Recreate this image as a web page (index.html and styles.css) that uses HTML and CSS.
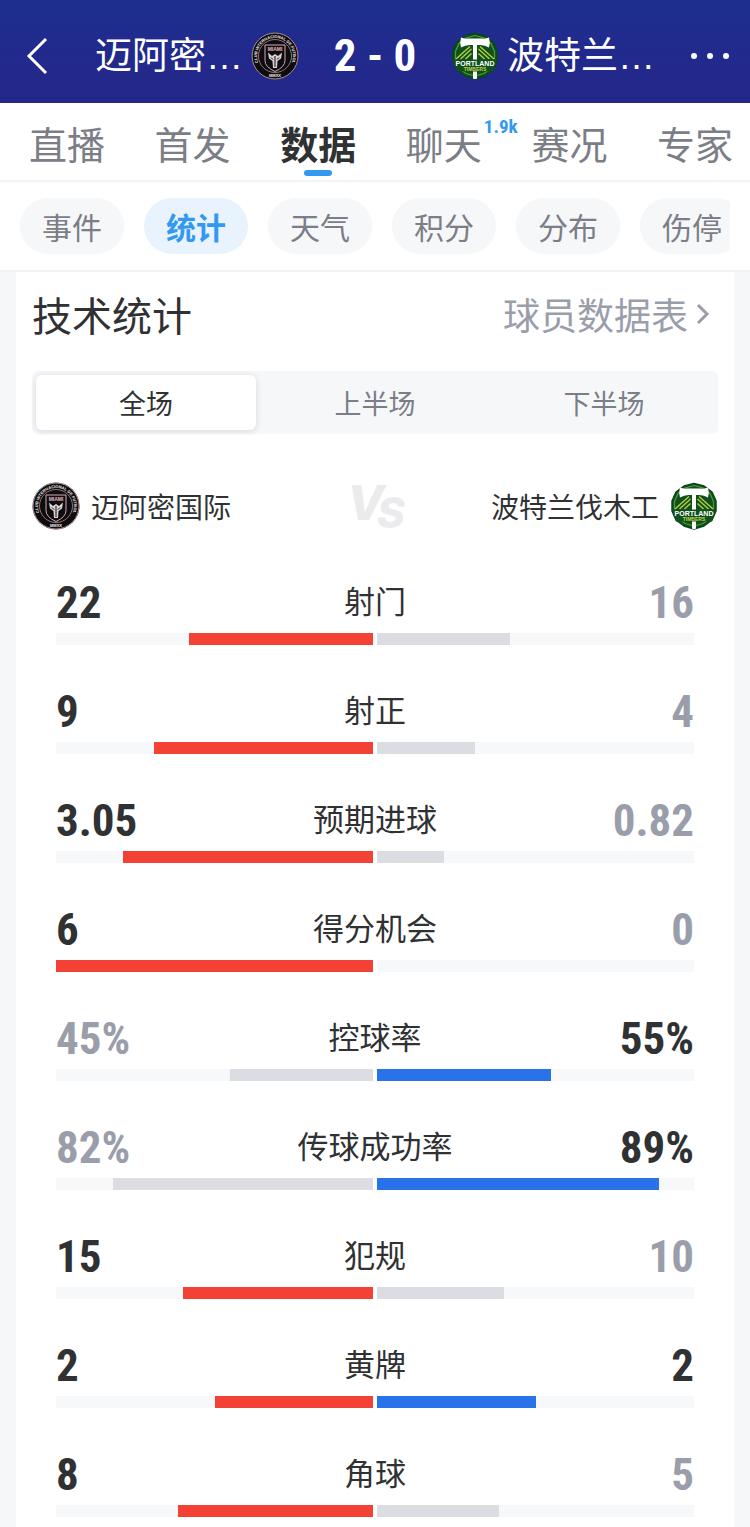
FILE: index.html
```
<!DOCTYPE html>
<html lang="zh-CN">
<head>
  <meta charset="UTF-8">
  <meta name="viewport" content="width=device-width, initial-scale=1">
  <title>迈阿密国际 2-0 波特兰伐木工</title>
  <link rel="stylesheet" href="styles.css">
</head>
<body>
  <!-- 队徽 -->
  <svg class="symbols" width="0" height="0" aria-hidden="true">
    <defs>
      <path id="ring" d="M8.400 33a18 18 0 1 1 31.200 0"/>
      <symbol id="miami" viewBox="0 0 48 48">
        <circle cx="24" cy="24" r="23.500" fill="#0d0c0e"/>
        <circle cx="24" cy="24" r="23" fill="none" stroke="#e0b3bf" stroke-width=".8"/>
        <text class="crest-ring"><textPath href="#ring" startOffset="50%">CLUB INTERNACIONAL DE FUTBOL</textPath></text>
        <text x="24" y="45" class="crest-ring">MMXX</text>
        <circle cx="24" cy="24" r="16.500" fill="#0d0c0e" stroke="#c9a0ab" stroke-width=".7"/>
        <path d="M14 13h20v15.500q0 6.500-10 11-10-4.500-10-11z" fill="#0d0c0e" stroke="#dba8b5" stroke-width="1"/>
        <text x="24" y="18.500" class="crest-miami">MIAMI</text>
        <path d="M17 20.500 21 24l3-2 3 2 4-3.500-1 6-3.500 2.500-.5 7h-4l-.5-7-3.500-2.500z" fill="#d9d3d5"/>
        <path d="M24 24v11M20 25.500l2 2M28 25.500l-2 2" stroke="#0d0c0e" stroke-width="1"/>
      </symbol>
      <symbol id="portland" viewBox="0 0 48 48">
        <path d="M24 1.500 34 4l8 6 4 9v10l-4 9-8 6-10 3-10-3-8-6-4-9V19l4-9 8-6z" fill="#10501f" stroke="#0b4419" stroke-width="1.500" stroke-linejoin="round"/>
        <path d="M24 3.500 33 6l7 5.500 3.500 8v9l-3.500 8-7 5L24 44l-9-2.500-7-5-3.500-8v-9l3.500-8L15 6z" fill="none" stroke="#4d9b35" stroke-width="1.200"/>
        <path d="M5 27 19 14.500M9.500 27 20.500 17M14.500 27l6-5.500M43 27 29 14.500M38.500 27 27.500 17M33.500 27l-6-5.500" stroke="#b5cf3c" stroke-width="1.400"/>
        <path d="M22 12h4v34.500q-2 1-4 0z" fill="#fff"/>
        <path d="M10 5.500q3 1.500 7 1h14q4 .5 7-1 1.500 5 0 10-4-2.500-8.500-2.500h-11q-4.500 0-8.500 2.500-1.500-5 0-10z" fill="#fff"/>
        <path d="M2.500 27.500h43v2.500L42 39.500H6L2.500 30z" fill="#10501f"/>
        <text x="24" y="33.500" class="crest-portland">PORTLAND</text>
        <text x="24" y="39" class="crest-timbers">TIMBERS</text>
      </symbol>
    </defs>
  </svg>

  <header class="topbar">
    <button class="icon-btn" aria-label="返回">
      <svg width="28" height="38" viewBox="-6 0 28 38" fill="none" stroke="#fff" stroke-width="3"><path d="M20 2 3 19l17 17"/></svg>
    </button>
    <div class="match">
      <span class="match-name">迈阿密…</span>
      <svg class="crest"><use href="#miami"/></svg>
      <strong class="score">2 - 0</strong>
      <svg class="crest"><use href="#portland"/></svg>
      <span class="match-name">波特兰…</span>
    </div>
    <button class="icon-btn more" aria-label="更多">
      <svg width="40" height="8" viewBox="0 0 40 8" fill="#fff"><circle cx="4" cy="4" r="3"/><circle cx="20" cy="4" r="3"/><circle cx="36" cy="4" r="3"/></svg>
    </button>
  </header>

  <nav class="tabs">
    <a href="#live">直播</a>
    <a href="#lineup">首发</a>
    <a href="#data" class="active">数据</a>
    <a href="#chat">聊天<sup class="badge">1.9k</sup></a>
    <a href="#report">赛况</a>
    <a href="#expert">专家</a>
  </nav>

  <div class="chips">
    <div class="chips-scroll">
      <button>事件</button>
      <button class="active">统计</button>
      <button>天气</button>
      <button>积分</button>
      <button>分布</button>
      <button>伤停</button>
    </div>
  </div>

  <main class="card">
    <div class="card-head">
      <h2>技术统计</h2>
      <a href="#players">球员数据表
        <svg width="14" height="22" viewBox="0 0 14 22" fill="none" stroke="#9a9eab" stroke-width="3"><path d="m2 2 9 9-9 9"/></svg>
      </a>
    </div>

    <div class="segment">
      <button class="active">全场</button>
      <button>上半场</button>
      <button>下半场</button>
    </div>

    <div class="teams">
      <div class="team"><svg class="crest"><use href="#miami"/></svg>迈阿密国际</div>
      <svg class="vs" width="64" height="64" viewBox="0 0 64 64"><text x="4" y="46">V<tspan class="vs-s" dx="-7" dy="8">S</tspan></text></svg>
      <div class="team team-away">波特兰伐木工<svg class="crest"><use href="#portland"/></svg></div>
    </div>

    <div class="stats">
      <div class="stat">
        <div class="values"><b>22</b><span>射门</span><b class="dim">16</b></div>
        <div class="bars">
          <div class="track"><i class="red" style="width:58%"></i></div>
          <div class="track"><i style="width:42%"></i></div>
        </div>
      </div>
      <div class="stat">
        <div class="values"><b>9</b><span>射正</span><b class="dim">4</b></div>
        <div class="bars">
          <div class="track"><i class="red" style="width:69.2%"></i></div>
          <div class="track"><i style="width:30.8%"></i></div>
        </div>
      </div>
      <div class="stat">
        <div class="values"><b>3.05</b><span>预期进球</span><b class="dim">0.82</b></div>
        <div class="bars">
          <div class="track"><i class="red" style="width:78.8%"></i></div>
          <div class="track"><i style="width:21.2%"></i></div>
        </div>
      </div>
      <div class="stat">
        <div class="values"><b>6</b><span>得分机会</span><b class="dim">0</b></div>
        <div class="bars">
          <div class="track"><i class="red" style="width:100%"></i></div>
          <div class="track"><i style="width:0%"></i></div>
        </div>
      </div>
      <div class="stat">
        <div class="values"><b class="dim">45%</b><span>控球率</span><b>55%</b></div>
        <div class="bars">
          <div class="track"><i style="width:45%"></i></div>
          <div class="track"><i class="blue" style="width:55%"></i></div>
        </div>
      </div>
      <div class="stat">
        <div class="values"><b class="dim">82%</b><span>传球成功率</span><b>89%</b></div>
        <div class="bars">
          <div class="track"><i style="width:82%"></i></div>
          <div class="track"><i class="blue" style="width:89%"></i></div>
        </div>
      </div>
      <div class="stat">
        <div class="values"><b>15</b><span>犯规</span><b class="dim">10</b></div>
        <div class="bars">
          <div class="track"><i class="red" style="width:60%"></i></div>
          <div class="track"><i style="width:40%"></i></div>
        </div>
      </div>
      <div class="stat">
        <div class="values"><b>2</b><span>黄牌</span><b>2</b></div>
        <div class="bars">
          <div class="track"><i class="red" style="width:50%"></i></div>
          <div class="track"><i class="blue" style="width:50%"></i></div>
        </div>
      </div>
      <div class="stat">
        <div class="values"><b>8</b><span>角球</span><b class="dim">5</b></div>
        <div class="bars">
          <div class="track"><i class="red" style="width:61.5%"></i></div>
          <div class="track"><i style="width:38.5%"></i></div>
        </div>
      </div>
    </div>
  </main>
</body>
</html>
```

FILE: styles.css
```
* {
  margin: 0;
  padding: 0;
  box-sizing: border-box;
}

:root {
  --text: #303133;
  --gray: #7b7e86;
  --light: #9a9eab;
  --bg: #f6f7f9;
  --accent: #3399f0;
  --num: "Roboto Condensed", "Liberation Sans Narrow", Roboto, sans-serif;
}

body {
  min-height: 100vh;
  display: flex;
  flex-direction: column;
  background: var(--bg);
  color: var(--text);
  font-family: "Liberation Sans", "Noto Sans CJK SC", sans-serif;
}

button {
  border: none;
  background: none;
  font: inherit;
  color: inherit;
  cursor: pointer;
}

a {
  color: inherit;
  text-decoration: none;
}

.symbols {
  position: absolute;
}

/* 顶部比分栏 */
.topbar {
  height: 103px;
  padding: 8px 20px 0;
  display: flex;
  align-items: center;
  background: linear-gradient(#1d2e8f, #25278a);
  color: #fff;
}

.icon-btn {
  flex: 1;
  display: flex;
}

.more {
  justify-content: flex-end;
}

.match {
  display: flex;
  align-items: center;
  gap: 8px;
}

.match-name {
  padding-top: 3px;
  font-size: 37px;
  line-height: 48px;
}

.crest {
  width: 48px;
  height: 48px;
  flex: none;
}

.score {
  width: 136px;
  text-align: center;
  font: bold 45px/48px var(--num);
}

.crest-miami,
.crest-ring,
.crest-portland,
.crest-timbers {
  font: bold 5px "Liberation Sans", sans-serif;
  fill: #e9b9c5;
  text-anchor: middle;
}

.crest-ring {
  font-size: 4px;
  fill: #f0ecee;
}

.crest-portland {
  font-size: 7px;
  fill: #fff;
}

.crest-timbers {
  fill: #c3d645;
}

/* 一级导航 */
.tabs {
  height: 79px;
  padding: 0 17px 0 29px;
  display: flex;
  justify-content: space-between;
  background: #fff;
  border-bottom: 2px solid #f3f3f5;
  color: var(--gray);
  font-size: 38px;
  line-height: 86px;
}

.tabs a {
  position: relative;
  height: 77px;
  white-space: nowrap;
}

.tabs .active {
  color: var(--text);
  font-weight: bold;
}

.tabs .active::after {
  content: '';
  position: absolute;
  left: 24px;
  bottom: 4px;
  width: 28px;
  height: 6px;
  border-radius: 3px;
  background: var(--accent);
}

.badge {
  position: absolute;
  left: 100%;
  top: 14px;
  margin-left: 2px;
  color: var(--accent);
  font: bold 19px/20px var(--num);
}

/* 二级导航 */
.chips {
  height: 90px;
  padding: 16px 20px;
  background: #fff;
  border-bottom: 2px solid #f3f3f5;
}

.chips-scroll {
  display: flex;
  gap: 20px;
  overflow: hidden;
}

.chips button {
  flex: none;
  width: 104px;
  height: 56px;
  border-radius: 28px;
  background: var(--bg);
  color: var(--gray);
  font-size: 30px;
}

.chips .active {
  background: #e8f3fe;
  color: var(--accent);
  font-weight: bold;
}

/* 统计卡片 */
.card {
  flex: 1;
  margin: 0 16px;
  padding: 16px 16px 0;
  background: #fff;
}

.card-head {
  display: flex;
  align-items: center;
  justify-content: space-between;
  height: 52px;
}

.card-head h2 {
  font-size: 40px;
  font-weight: 400;
}

.card-head a {
  display: flex;
  align-items: center;
  gap: 8px;
  padding-right: 8px;
  color: var(--light);
  font-size: 37px;
}

.segment {
  display: flex;
  gap: 9px;
  margin-top: 31px;
  padding: 4px;
  border-radius: 6px;
  background: var(--bg);
}

.segment button {
  flex: 1;
  height: 55px;
  border-radius: 6px;
  color: var(--gray);
  font-size: 27px;
}

.segment .active {
  background: #fff;
  color: var(--text);
  box-shadow: 0 1px 6px rgba(40, 50, 70, .16);
}

.teams {
  display: grid;
  grid-template-columns: 1fr auto 1fr;
  align-items: center;
  height: 64px;
  margin-top: 40px;
}

.team {
  display: flex;
  align-items: center;
  gap: 11px;
  font-size: 28px;
}

.team-away {
  justify-content: flex-end;
}

.vs {
  fill: #ebebed;
  stroke: #fff;
  stroke-width: 3px;
  paint-order: stroke;
  font: italic 800 48px Inter, "Liberation Sans", sans-serif;
}

.vs-s {
  font-size: 42px;
}

/* 数据对比 */
.stats {
  padding: 35px 24px 0;
}

.stat {
  padding-bottom: 37px;
}

.stat:last-child {
  padding-bottom: 0;
}

.values {
  display: grid;
  grid-template-columns: 1fr auto 1fr;
  line-height: 60px;
}

.values b {
  font: bold 45px/60px var(--num);
}

.values b:last-child {
  text-align: right;
}

.values span {
  font-size: 31px;
}

.values .dim {
  color: var(--light);
}

.bars {
  display: flex;
  gap: 4px;
}

.track {
  flex: 1;
  height: 12px;
  display: flex;
  justify-content: flex-end;
  background: #f7f8fa;
}

.track + .track {
  justify-content: flex-start;
}

.track i {
  background: #dcdde3;
}

.track .red {
  background: #f34235;
}

.track .blue {
  background: #2a72ea;
}
```
